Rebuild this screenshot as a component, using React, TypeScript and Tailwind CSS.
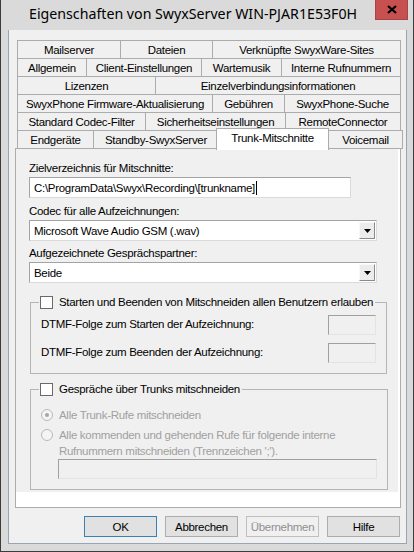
import { type ReactNode } from "react";

const UI = "font-['Liberation_Sans',Arial,sans-serif] text-[11.5px] tracking-[-0.3px] text-black";

function Tab({ label, className }: { label: string; className: string }) {
  return (
    <div
      className={`-ml-px flex h-[19px] shrink-0 items-center justify-center border border-[#acacac] bg-[#f0f0f0] leading-[14px] first:ml-0 ${className}`}
    >
      {label}
    </div>
  );
}

function TabRow({ children }: { children: ReactNode }) {
  return <div className="-mt-px flex h-[19px] items-start first:mt-0">{children}</div>;
}

function Checkbox() {
  return <span className="block size-[13px] shrink-0 border border-[#6a6a6a] bg-white" />;
}

function Radio({ checked }: { checked?: boolean }) {
  return (
    <span className="flex size-[12px] shrink-0 items-center justify-center rounded-full border border-[#b9b9b9] bg-[#f4f4f4]">
      {checked && <span className="size-[4px] rounded-full bg-[#a6a6a6]" />}
    </span>
  );
}

function DropArrow() {
  return (
    <div className="mr-px flex h-[17px] w-[16px] items-center justify-center border border-[#f8f8f8] border-r-[#8a8a8a] border-b-[#8a8a8a] bg-[#ececec]">
      <svg width="7" height="4" viewBox="0 0 7 4" aria-hidden>
        <path d="M0 0h7L3.5 4z" fill="#000" />
      </svg>
    </div>
  );
}

function Select({ value }: { value: string }) {
  return (
    <div className="flex h-[21px] w-[348px] items-center border border-[#a3a3a3] border-r-[#dadada] border-b-[#dadada] bg-white">
      <span className="flex-1 pl-[4px] leading-[14px]">{value}</span>
      <DropArrow />
    </div>
  );
}

function DisabledBox({ className }: { className: string }) {
  return (
    <div
      className={`h-[20px] border border-[#a0a0a0] border-r-[#e3e3e3] border-b-[#e3e3e3] bg-[#f0f0f0] ${className}`}
    />
  );
}

function GroupBox({ title, className, children }: { title: string; className: string; children: ReactNode }) {
  return (
    <fieldset className={`ml-px w-[357px] border border-[#b5b5b5] px-0 pb-[10px] ${className}`}>
      <legend className="ml-[8px] flex h-[13px] items-center gap-[6px] whitespace-nowrap px-px">
        <Checkbox />
        <span className="pr-px leading-[13px]">{title}</span>
      </legend>
      <div className="px-[10px]">{children}</div>
    </fieldset>
  );
}

function Button({ label, variant }: { label: string; variant?: "default" | "disabled" }) {
  const tone =
    variant === "default"
      ? "border-[#3c7fb1] bg-[#e1e1e1] text-black"
      : variant === "disabled"
        ? "border-[#bfbfbf] bg-[#f0f0f0] text-[#8f8f8f]"
        : "border-[#adadad] bg-[#e1e1e1] text-black";
  return (
    <div className={`flex h-[21px] w-[73px] items-center justify-center border leading-[14px] ${tone}`}>
      {label}
    </div>
  );
}

function CloseGlyph() {
  return (
    <svg width="10" height="9" viewBox="0 0 10 9" aria-hidden>
      <path d="M1 1l8 7M9 1L1 8" stroke="#000" strokeWidth="2.2" />
    </svg>
  );
}

export default function App() {
  return (
    <div className="h-[552px] w-[414px] overflow-hidden bg-[#3c3c3c] px-px pb-px">
      <div className="flex h-[551px] w-[412px] flex-col bg-[#dadada]">
        {/* title bar */}
        <div className="flex h-[30px] items-start">
          <div className="flex-1 pl-[28px] pt-[4px] font-['Noto_Sans',sans-serif] text-[14.2px] leading-[20px] text-black">
            Eigenschaften von SwyxServer WIN-PJAR1E53F0H
          </div>
          <div className="mr-[5px] flex h-[20px] w-[33px] items-center justify-center border border-t-0 border-[#a84444] bg-[#c75050]">
            <CloseGlyph />
          </div>
        </div>

        {/* client area */}
        <div className={`ml-[7px] flex h-[514px] w-[399px] flex-col border border-t-0 border-[#9aa5b3] bg-[#f0f0f0] ${UI}`}>
          <div className="ml-[8px] mt-[10px] flex flex-col">
            <TabRow>
              <Tab label="Mailserver" className="w-[104px]" />
              <Tab label="Dateien" className="w-[93px]" />
              <Tab label="Verknüpfte SwyxWare-Sites" className="w-[189px]" />
            </TabRow>
            <TabRow>
              <Tab label="Allgemein" className="w-[70px]" />
              <Tab label="Client-Einstellungen" className="w-[116px]" />
              <Tab label="Wartemusik" className="w-[81px]" />
              <Tab label="Interne Rufnummern" className="w-[120px]" />
            </TabRow>
            <TabRow>
              <Tab label="Lizenzen" className="w-[139px]" />
              <Tab label="Einzelverbindungsinformationen" className="w-[246px]" />
            </TabRow>
            <TabRow>
              <Tab label="SwyxPhone Firmware-Aktualisierung" className="w-[196px]" />
              <Tab label="Gebühren" className="w-[73px]" />
              <Tab label="SwyxPhone-Suche" className="w-[117px]" />
            </TabRow>
            <TabRow>
              <Tab label="Standard Codec-Filter" className="w-[129px]" />
              <Tab label="Sicherheitseinstellungen" className="w-[141px]" />
              <Tab label="RemoteConnector" className="w-[116px]" />
            </TabRow>
            <TabRow>
              <Tab label="Endgeräte" className="w-[77px]" />
              <Tab label="Standby-SwyxServer" className="w-[126px]" />
              <div className="relative z-10 -mt-[2px] -ml-[3px] flex h-[22px] w-[113px] shrink-0 justify-center border border-b-0 border-[#acacac] bg-white pt-[2px] leading-[14px]">
                Trunk-Mitschnitte
              </div>
              <Tab label="Voicemail" className="-ml-[3px] w-[75px]" />
            </TabRow>
          </div>

          {/* tab page */}
          <div className="-mt-px ml-[6px] flex h-[360px] w-[386px] flex-col border border-[#acacac] bg-white">
            <div className="mb-[15px] mr-[2px] flex flex-1 flex-col bg-[#f0f0f0] pl-[13px]">
              <div className="mt-[13px] h-[13px] leading-[13px]">Zielverzeichnis für Mitschnitte:</div>
              <div className="mt-[2px] flex h-[21px] w-[322px] items-center border border-[#a3a3a3] border-r-[#dadada] border-b-[#dadada] bg-white pl-[4px] leading-[14px]">
                C:\ProgramData\Swyx\Recording\[trunkname]
                <span className="ml-px h-[14px] w-px bg-black" />
              </div>

              <div className="mt-[7px] h-[13px] leading-[13px]">Codec für alle Aufzeichnungen:</div>
              <div className="mt-[2px]">
                <Select value="Microsoft Wave Audio GSM (.wav)" />
              </div>

              <div className="mt-[6px] h-[13px] leading-[13px]">Aufgezeichnete Gesprächspartner:</div>
              <div className="mt-[2px]">
                <Select value="Beide" />
              </div>

              <GroupBox title="Starten und Beenden von Mitschneiden allen Benutzern erlauben" className="mt-[13px]">
                <div className="mt-[6px] flex h-[20px] items-center justify-between">
                  <span>DTMF-Folge zum Starten der Aufzeichnung:</span>
                  <DisabledBox className="w-[48px]" />
                </div>
                <div className="mt-[8px] flex h-[20px] items-center justify-between">
                  <span>DTMF-Folge zum Beenden der Aufzeichnung:</span>
                  <DisabledBox className="w-[48px]" />
                </div>
              </GroupBox>

              <GroupBox title="Gespräche über Trunks mitschneiden" className="mt-[9px]">
                <div className="mt-[12px] flex h-[14px] items-center gap-[6px] text-[#a0a0a0]">
                  <Radio checked />
                  <span className="leading-[14px]">Alle Trunk-Rufe mitschneiden</span>
                </div>
                <div className="mt-[5px] flex items-start gap-[6px] text-[#a0a0a0]">
                  <div className="mt-[2px]">
                    <Radio />
                  </div>
                  <span className="leading-[16px]">
                    Alle kommenden und gehenden Rufe für folgende interne
                    <br />
                    Rufnummern mitschneiden (Trennzeichen ';').
                  </span>
                </div>
                <DisabledBox className="ml-[17px] w-[319px]" />
              </GroupBox>
            </div>
          </div>

          {/* dialog buttons */}
          <div className="ml-[75px] mt-[8px] flex gap-[8px]">
            <Button label="OK" variant="default" />
            <Button label="Abbrechen" />
            <Button label="Übernehmen" variant="disabled" />
            <Button label="Hilfe" />
          </div>
        </div>
      </div>
    </div>
  );
}
